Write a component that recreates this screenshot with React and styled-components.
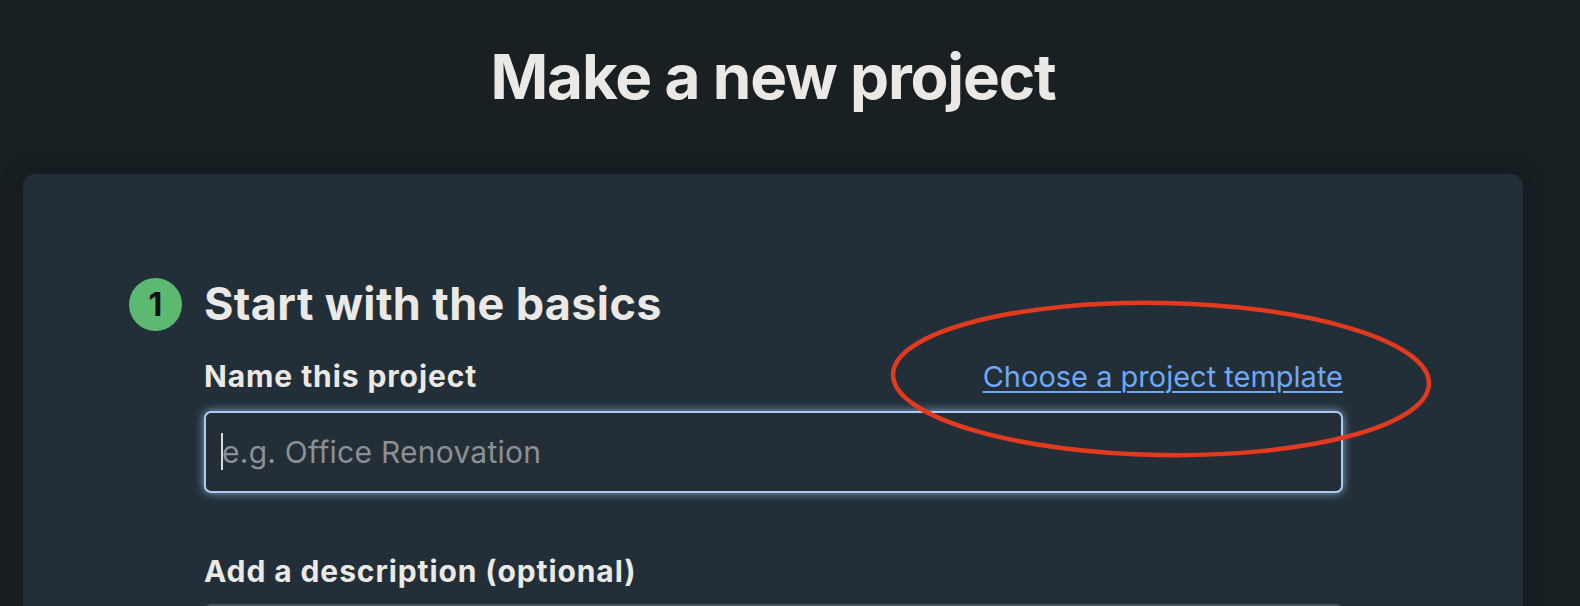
import React from "react";
import styled, { createGlobalStyle } from "styled-components";

const GlobalStyle = createGlobalStyle`
  html, body {
    margin: 0;
    padding: 0;
    background: #192024;
    font-family: Inter, "Noto Sans", sans-serif;
    color: #ebe9e5;
    overflow: hidden;
  }
`;

const Page = styled.div`
  position: relative;
  width: 1500px;
  padding: 40px 0 0 23px;
`;

const Title = styled.h1`
  margin: 0 0 60px;
  font-size: 62px;
  line-height: 74px;
  font-weight: 700;
  text-align: center;
  letter-spacing: -1.2px;
`;

const Panel = styled.section`
  background: #232f38;
  border-radius: 12px;
  box-shadow: 0 0 22px rgba(0, 0, 0, 0.28);
  padding: 103px 180px 80px 106px;
  min-height: 500px;
`;

const Step = styled.div`
  display: grid;
  grid-template-columns: 53px 1fr;
  column-gap: 22px;
`;

const StepBadge = styled.div`
  width: 53px;
  height: 53px;
  border-radius: 50%;
  background: #5db872;
  color: #0d1112;
  font-size: 32px;
  font-weight: 700;
  display: flex;
  align-items: center;
  justify-content: center;
  align-self: center;
`;

const StepTitle = styled.h2`
  margin: 0;
  font-size: 45px;
  line-height: 54px;
  font-weight: 700;
  letter-spacing: 0.35px;
`;

const Fields = styled.div`
  grid-column: 2;
`;

const LabelRow = styled.div`
  display: flex;
  justify-content: space-between;
  align-items: baseline;
  margin-top: ${(p) => p.$top}px;
  margin-bottom: ${(p) => p.$bottom}px;
`;

const Label = styled.label`
  font-size: 30px;
  line-height: 35px;
  font-weight: 700;
  letter-spacing: 0.9px;
`;

const TemplateLink = styled.a`
  font-size: 29px;
  line-height: 35px;
  color: #6ea8f7;
  text-decoration: underline;
  text-decoration-thickness: 2px;
  text-underline-offset: 4px;
  cursor: pointer;
`;

const InputWrap = styled.div`
  position: relative;
`;

const TextInput = styled.input`
  box-sizing: border-box;
  width: 100%;
  height: 82px;
  padding: 0 16px;
  background: #232e37;
  border: 2px solid #a9cdf6;
  border-radius: 7px;
  box-shadow: 0 0 10px rgba(165, 205, 250, 0.75);
  font-family: inherit;
  font-size: 30px;
  letter-spacing: 0.25px;
  color: #ebe9e5;
  caret-color: transparent;
  outline: none;

  &::placeholder {
    color: #8b9094;
  }
`;

const Caret = styled.span`
  position: absolute;
  left: 17px;
  top: 22px;
  width: 2px;
  height: 37px;
  background: #d8dadc;
`;

const TextArea = styled.textarea`
  box-sizing: border-box;
  display: block;
  width: 100%;
  height: 140px;
  background: #232e37;
  border: 2px solid #4b555c;
  border-radius: 7px;
  resize: none;
  outline: none;
`;

const Annotation = styled.svg`
  position: absolute;
  left: 0;
  top: 0;
  pointer-events: none;
`;

export default function App() {
  return (
    <>
      <GlobalStyle />
      <Page>
        <Title>Make a new project</Title>
        <Panel>
          <Step>
            <StepBadge>1</StepBadge>
            <StepTitle>Start with the basics</StepTitle>
            <Fields>
              <LabelRow $top={28} $bottom={17}>
                <Label htmlFor="project-name">Name this project</Label>
                <TemplateLink>Choose a project template</TemplateLink>
              </LabelRow>
              <InputWrap>
                <TextInput id="project-name" placeholder="e.g. Office Renovation" />
                <Caret />
              </InputWrap>
              <LabelRow $top={61} $bottom={15}>
                <Label htmlFor="project-desc">Add a description (optional)</Label>
              </LabelRow>
              <TextArea id="project-desc" />
            </Fields>
          </Step>
        </Panel>
        <Annotation width="1580" height="606">
          <ellipse
            cx="1161"
            cy="379"
            rx="268"
            ry="76"
            transform="rotate(1 1161 379)"
            fill="none"
            stroke="#e23a1f"
            strokeWidth="4.5"
          />
        </Annotation>
      </Page>
    </>
  );
}
